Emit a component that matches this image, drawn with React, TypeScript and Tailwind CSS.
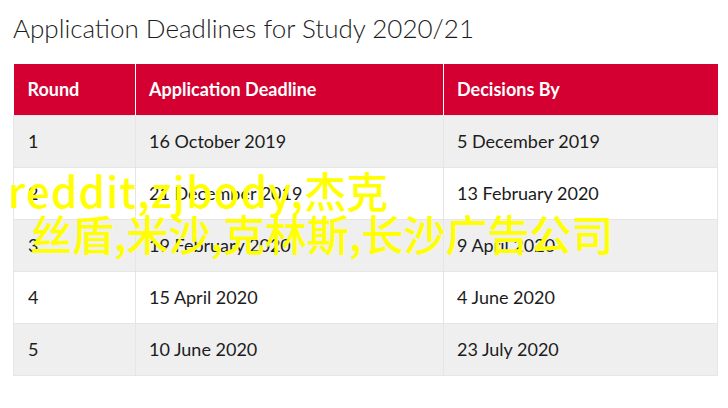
import React from 'react';

const rows = [
  { round: '1', deadline: '16 October 2019', decision: '5 December 2019' },
  { round: '2', deadline: '21 December 2019', decision: '13 February 2020' },
  { round: '3', deadline: '19 February 2020', decision: '9 April 2020' },
  { round: '4', deadline: '15 April 2020', decision: '4 June 2020' },
  { round: '5', deadline: '10 June 2020', decision: '23 July 2020' },
];

const App = () => {
  return (
    <div className="relative w-[728px] h-[408px] overflow-hidden bg-white font-['Lato',sans-serif] text-[#1c1c1c]">
      {/* Title */}
      <h1 className="pl-[13px] pt-[10px] h-[64px] text-[26px] leading-[36px] font-light">
        Application Deadlines for Study 2020/21
      </h1>

      {/* Deadlines table */}
      <table className="ml-[13px] w-[705px] border-collapse text-[18px]">
        <thead>
          <tr className="bg-[#d30031] text-white h-[51px]">
            <th className="w-[122px] pl-[14px] text-left font-bold border-r border-white">Round</th>
            <th className="w-[308px] pl-[13px] text-left font-bold border-r border-white">Application Deadline</th>
            <th className="pl-[13px] text-left font-bold">Decisions By</th>
          </tr>
        </thead>
        <tbody>
          {rows.map((r, i) => (
            <tr key={r.round} className={i % 2 === 0 ? 'bg-[#efefef] h-[52px]' : 'bg-white h-[52px]'}>
              <td className="pl-[14px] border border-[#e6e6e6]">{r.round}</td>
              <td className="pl-[13px] border border-[#e6e6e6]">{r.deadline}</td>
              <td className="pl-[13px] border border-[#e6e6e6]">{r.decision}</td>
            </tr>
          ))}
        </tbody>
      </table>

      {/* Watermark overlay */}
      <div className="absolute left-[8px] top-[168px] text-[42px] leading-[43px] font-medium text-[#ffff00] font-['Noto_Sans_CJK_SC',sans-serif] whitespace-nowrap">
        <div>
          <span className="tracking-[1.2px]">reddit,zjbody,</span>杰克
        </div>
        <div className="pl-[22px]">丝盾,米沙,克林斯,长沙广告公司</div>
      </div>
    </div>
  );
};

export default App;
